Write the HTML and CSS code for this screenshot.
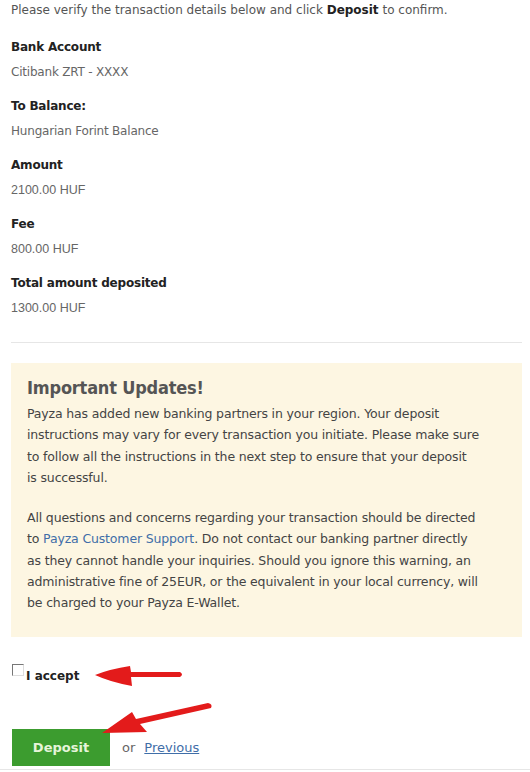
FILE: index.html
```html
<!DOCTYPE html>
<html>
<head>
<meta charset="utf-8">
<link rel="stylesheet" href="styles.css">
</head>
<body>
<div class="page">
  <p class="intro">Please verify the transaction details below and click <b>Deposit</b> to confirm.</p>
  <dl class="details">
    <dt>Bank Account</dt>
    <dd class="t">Citibank ZRT - XXXX</dd>
    <dt>To Balance:</dt>
    <dd class="t">Hungarian Forint Balance</dd>
    <dt>Amount</dt>
    <dd>2100.00 HUF</dd>
    <dt>Fee</dt>
    <dd>800.00 HUF</dd>
    <dt>Total amount deposited</dt>
    <dd>1300.00 HUF</dd>
  </dl>
  <hr class="sep">
  <div class="notice">
    <h2>Important Updates!</h2>
    <p>Payza has added new banking partners in your region. Your deposit instructions may vary for every transaction you initiate. Please make sure to follow all the instructions in the next step to ensure that your deposit<br>is successful.</p>
    <p>All questions and concerns regarding your transaction should be directed to <a href="#">Payza Customer Support</a>. Do not contact our banking partner directly as they cannot handle your inquiries. Should you ignore this warning, an administrative fine of 25EUR, or the equivalent in your local currency, will be charged to your Payza E-Wallet.</p>
  </div>
  <div class="accept">
    <span class="box"></span><span class="lbl">I accept</span>
  </div>
  <div class="actions">
    <button class="btn">Deposit</button>
    <span class="or">or</span>
    <a href="#" class="prev">Previous</a>
  </div>
  <hr class="bottom">
  <svg class="arrow a1" width="100" height="35" viewBox="0 0 100 35">
    <path d="M5 15 Q20 9 40 6 L41 12 L90 12 Q94 14.5 90 17 L41 17 L42 26 Q20 22 5 15 Z" fill="#e31b1b"/>
  </svg>
  <svg class="arrow a2" width="120" height="40" viewBox="0 0 120 40">
    <path d="M7 33 L37 12 L41 19 L113 3 Q118 4 116 8 L45 24 L52 32 Z" fill="#e31b1b"/>
  </svg>
</div>
</body>
</html>
```
FILE: styles.css
```css
html, body { margin: 0; padding: 0; background: #fff; }
.page {
  position: relative;
  width: 530px;
  height: 772px;
  overflow: hidden;
  font-family: "DejaVu Sans", sans-serif;
  color: #555;
}
.intro {
  margin: 0;
  padding: 3px 0 0 11px;
  font-size: 12px;
  line-height: 15px;
  letter-spacing: 0;
}
.intro b { color: #222; }
.details { margin: 22px 0 0 11px; }
.details dt {
  font-weight: bold;
  color: #222;
  font-size: 12px;
  line-height: 15px;
  letter-spacing: -0.2px;
}
.details dd {
  margin: 10px 0 19px 0;
  font-family: "Liberation Sans", sans-serif;
  font-size: 12.5px;
  line-height: 15px;
  color: #666;
}
.details dd.t {
  font-family: "DejaVu Sans", sans-serif;
  font-size: 12px;
  letter-spacing: -0.2px;
}
.sep {
  margin: 26px 8px 0 11px;
  border: 0;
  border-top: 1px solid #e6e6e6;
  height: 0;
}
.notice {
  margin: 20px 8px 0 11px;
  background: #fdf6e2;
  padding: 13px 39px 0 16px;
  height: 261px;
}
.notice h2 {
  margin: 0 0 3px 0;
  font-family: "DejaVu Sans Condensed", "DejaVu Sans", sans-serif;
  font-size: 18px;
  line-height: 24px;
  font-weight: bold;
  color: #555;
  letter-spacing: -0.2px;
}
.notice p {
  margin: 0 0 19px 0;
  font-size: 12.5px;
  line-height: 21.3px;
  color: #444;
  letter-spacing: -0.15px;
}
.notice a { color: #3f6ea8; text-decoration: none; }
.accept {
  margin: 26px 0 0 12px;
  display: flex;
  align-items: flex-start;
}
.box {
  width: 10px;
  height: 10px;
  border-top: 1px solid #777;
  border-left: 1px solid #777;
  border-right: 1px solid #ddd;
  border-bottom: 1px solid #ddd;
  margin-top: 1px;
}
.lbl {
  margin: 6px 0 0 2px;
  font-weight: bold;
  color: #222;
  font-size: 12px;
  line-height: 15px;
}
.actions {
  margin: 45px 0 0 12px;
  display: flex;
  align-items: center;
}
.btn {
  width: 98px;
  height: 37px;
  border: 0;
  background: #3c9c2f;
  color: #e6f4da;
  font-family: "DejaVu Sans", sans-serif;
  font-weight: bold;
  font-size: 13px;
  padding: 0;
}
.or {
  margin-left: 12px;
  color: #666;
  font-size: 13px;
  font-family: "DejaVu Sans", sans-serif;
}
.prev {
  margin-left: 9px;
  color: #3f6ea8;
  font-size: 13px;
  text-decoration: underline;
}
.bottom {
  margin: 3px 0 0 0;
  border: 0;
  border-top: 1px solid #e6e6e6;
}
.arrow { position: absolute; }
.a1 { left: 90px; top: 660px; }
.a2 { left: 95px; top: 700px; }
```
